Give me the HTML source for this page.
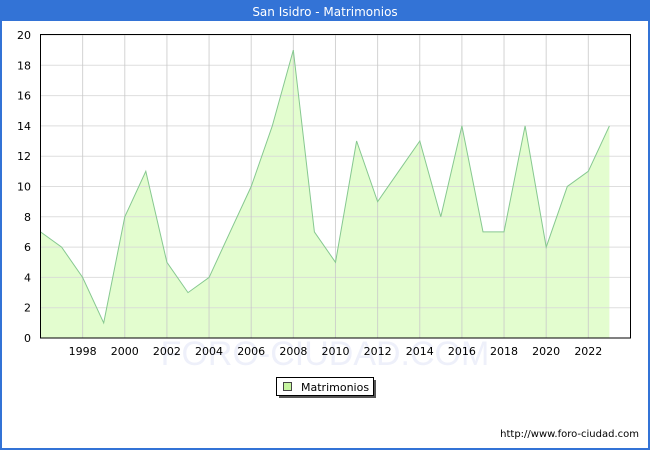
<!DOCTYPE html>
<html><head><meta charset="utf-8"><style>
html,body{margin:0;padding:0;width:650px;height:450px;overflow:hidden;background:#fff;font-family:"DejaVu Sans","Liberation Sans",sans-serif;}
</style></head><body>
<svg id="s" width="650" height="450" xmlns="http://www.w3.org/2000/svg" font-family="DejaVu Sans, Liberation Sans, sans-serif">
<rect x="0" y="0" width="650" height="450" fill="#3373d6"/>
<rect x="2" y="21" width="646" height="427" fill="#fff"/>
<text x="325" y="16" fill="#fff" font-size="12" text-anchor="middle">San Isidro - Matrimonios</text>
<text x="325" y="365" fill="#eef0fa" font-size="34" text-anchor="middle" font-family="Liberation Sans, sans-serif">FORO-CIUDAD.COM</text>
<polygon id="area" fill="#e3fdcf" stroke="none"/>
<g id="grid"></g>
<polyline id="line" fill="none" stroke="#86c890" stroke-width="1"/>
<rect x="40.5" y="34.5" width="590" height="303.5" fill="none" stroke="#000" stroke-width="1"/>
<g id="labels" font-size="11" fill="#000"></g>
<rect x="279" y="380" width="97" height="18" fill="#555"/>
<rect x="276.5" y="377.5" width="97" height="18" fill="#fff" stroke="#000"/>
<rect x="283.5" y="382.5" width="8" height="8" fill="#c6f5a0" stroke="#444"/>
<text x="301" y="391" font-size="11">Matrimonios</text>
<text x="639" y="437" font-size="10" text-anchor="end">http://www.foro-ciudad.com</text>
</svg>
<script>
var d=[7,6,4,1,8,11,5,3,4,7,10,14,19,7,5,13,9,11,13,8,14,7,7,14,6,10,11,14];
var X=function(i){return 40.5+i*21.07},Y=function(v){return 338-v*15.15};
var ns="http://www.w3.org/2000/svg",g=document.getElementById('grid'),L=document.getElementById('labels');
function el(p,t,a,txt){var e=document.createElementNS(ns,t);for(var k in a)e.setAttribute(k,a[k]);if(txt)e.textContent=txt;p.appendChild(e);}
for(var v=2;v<=20;v+=2){el(g,'line',{x1:40,x2:630,y1:Y(v),y2:Y(v),stroke:'#d6d6d6','stroke-opacity':'0.8'});}
for(var v=0;v<=20;v+=2){el(L,'text',{x:31,y:Y(v)+4,'text-anchor':'end'},String(v));}
for(var yr=1998;yr<=2022;yr+=2){var x=X(yr-1996);el(g,'line',{x1:x,x2:x,y1:35,y2:338,stroke:'#c8c8c8','stroke-opacity':'0.8'});el(L,'text',{x:x,y:355,'text-anchor':'middle'},String(yr));}
var pts=d.map(function(v,i){return X(i).toFixed(1)+','+Y(v).toFixed(1)}).join(' ');
document.getElementById('line').setAttribute('points',pts);
document.getElementById('area').setAttribute('points',pts+' '+X(27).toFixed(1)+',338 40.5,338');
</script>
</body></html>
